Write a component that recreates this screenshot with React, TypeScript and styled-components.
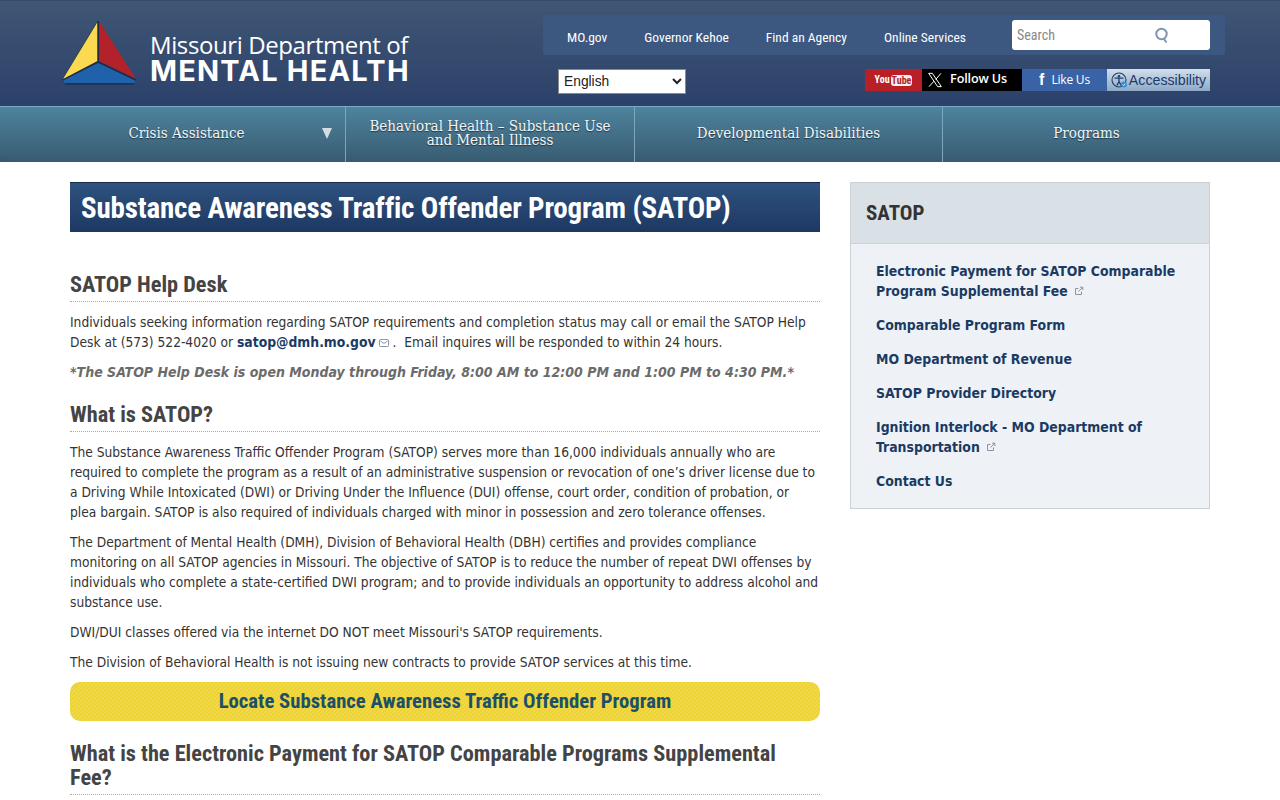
import React from 'react';
import styled, { createGlobalStyle } from 'styled-components';

const GlobalStyle = createGlobalStyle`
  html, body {
    margin: 0;
    padding: 0;
    height: 800px;
    overflow: hidden;
    background: #fff;
  }
  body {
    font-family: "DejaVu Sans Condensed", "DejaVu Sans", sans-serif;
    font-size: 13.65px;
    line-height: 20px;
    color: #333;
  }
`;

const HEADING_FONT = `"Liberation Sans Narrow", "Roboto Condensed", "Liberation Sans", sans-serif`;
const NAV_FONT = `"DejaVu Serif Condensed", "DejaVu Serif", serif`;

const Header = styled.header`
  height: 106px;
  box-sizing: border-box;
  background: linear-gradient(180deg, #3f5674 0%, #2c416a 100%);
  border-top: 1px solid #33496a;
  display: flex;
  justify-content: space-between;
  padding: 14px 55px 0 62px;
`;

const LogoLink = styled.a`
  display: flex;
  align-items: flex-start;
  gap: 12px;
  padding-top: 5px;
  color: #fff;
  text-decoration: none;
`;

const LogoText = styled.div`
  display: flex;
  flex-direction: column;
  padding-top: 12px;
`;

const LogoTop = styled.span`
  font-family: "Open Sans", sans-serif;
  font-size: 24px;
  line-height: 25px;
  letter-spacing: -0.4px;
  white-space: nowrap;
`;

const LogoBottom = styled.span`
  font-family: "Inter", sans-serif;
  font-weight: 700;
  font-size: 29px;
  line-height: 28px;
  letter-spacing: 1.2px;
  white-space: nowrap;
`;

const HeaderRight = styled.div`
  width: 682px;
  display: flex;
  flex-direction: column;
`;

const UtilityBar = styled.div`
  height: 40px;
  background: #3d5880;
  border-radius: 3px;
  display: flex;
  align-items: center;
  justify-content: space-between;
  padding: 0 15px 0 24px;
`;

const UtilityLinks = styled.nav`
  display: flex;
  gap: 37px;
  padding-top: 4px;
`;

const UtilityLink = styled.a`
  font-family: ${HEADING_FONT};
  font-size: 13.5px;
  color: #fff;
  text-decoration: none;
  white-space: nowrap;
`;

const SearchBox = styled.div`
  width: 198px;
  height: 30px;
  box-sizing: border-box;
  background: #fff;
  border-radius: 3px;
  display: flex;
  align-items: center;
  justify-content: space-between;
  padding: 0 40px 0 5px;
`;

const SearchLabel = styled.span`
  font-family: ${HEADING_FONT};
  font-size: 14px;
  color: #888;
`;

const ToolRow = styled.div`
  display: flex;
  justify-content: space-between;
  align-items: flex-start;
  padding: 14px 15px 0 15px;
`;

const LanguageSelect = styled.select`
  width: 128px;
  height: 25px;
  font-family: "Liberation Sans", sans-serif;
  font-size: 13.8px;
  color: #222;
  background: #fff;
  border: 1px solid #8a8a8a;
  padding: 0 0 0 1px;
`;

const SocialRow = styled.div`
  display: flex;
  height: 22px;
`;

const SocialItem = styled.a<{ $bg: string; $w: number; $inset?: number }>`
  width: ${p => p.$w}px;
  box-sizing: border-box;
  padding-right: ${p => p.$inset ?? 0}px;
  background: ${p => p.$bg};
  color: #fff;
  display: flex;
  align-items: center;
  justify-content: center;
  text-decoration: none;
  font-family: "Liberation Sans", sans-serif;
  font-size: 13px;
  white-space: nowrap;
`;

const YouWord = styled.span`
  font-family: ${HEADING_FONT};
  font-weight: 700;
  font-size: 10px;
  margin-right: 1px;
`;

const TubeWord = styled.span`
  font-family: ${HEADING_FONT};
  font-weight: 700;
  font-size: 10px;
  line-height: 11px;
  background: #eee;
  color: #b91f26;
  border-radius: 3px;
  padding: 0 1px;
`;

const FollowText = styled.span`
  font-family: "Open Sans", sans-serif;
  font-weight: 600;
  font-size: 12.6px;
  letter-spacing: -0.15px;
  margin-left: 7px;
  padding-bottom: 2px;
`;

const LikeMark = styled.span`
  font-family: "Liberation Sans", sans-serif;
  font-weight: 700;
  font-size: 16px;
  margin-right: 7px;
`;

const LikeText = styled.span`
  font-family: "Open Sans", sans-serif;
  font-size: 12px;
  letter-spacing: -0.2px;
`;

const AccessItem = styled(SocialItem)`
  background: linear-gradient(180deg, #d3dfeb 0%, #8da8c6 100%);
  color: #1c3a6c;
  font-family: "Liberation Sans", sans-serif;
  font-size: 14.2px;
  gap: 1px;
`;

const NavBar = styled.nav`
  height: 56px;
  display: grid;
  grid-template-columns: 346px 289px 308px 337px;
  background:
    repeating-linear-gradient(45deg, rgba(255,255,255,0.03) 0 1.41px, transparent 1.41px 2.83px),
    linear-gradient(180deg, #4c819c 0%, #34596f 100%);
  border-top: 1px solid #79a9c4;
  box-sizing: border-box;
`;

const NavItem = styled.a<{ $shift?: 'left' | 'right' }>`
  position: relative;
  display: flex;
  align-items: center;
  justify-content: center;
  box-sizing: border-box;
  text-align: center;
  font-family: ${NAV_FONT};
  font-size: 15px;
  line-height: 14px;
  color: #f2f5f7;
  text-shadow: 0 1px 1px rgba(0, 0, 0, 0.5);
  text-decoration: none;
  border-right: 1px solid #7aa6bf;
  padding-bottom: 4px;
  padding-left: ${p => (p.$shift === 'right' ? '28px' : '0')};
  padding-right: ${p => (p.$shift === 'left' ? '50px' : '0')};
  &:last-child {
    border-right: none;
  }
`;

const NavArrow = styled.span`
  position: absolute;
  right: 13px;
  top: 21px;
  width: 0;
  height: 0;
  border-left: 5.5px solid transparent;
  border-right: 5.5px solid transparent;
  border-top: 11px solid #d5dde0;
`;

const Page = styled.div`
  display: grid;
  grid-template-columns: 750px 360px;
  column-gap: 30px;
  padding: 20px 70px 0;
`;

const Main = styled.main`
  min-width: 0;
`;

const PageTitle = styled.h1`
  margin: 0 0 40px;
  height: 50px;
  box-sizing: border-box;
  padding-left: 11px;
  display: flex;
  align-items: center;
  background: linear-gradient(180deg, #2f527f 0%, #1d3862 100%);
  border-top: 1px solid #14294a;
  font-family: ${HEADING_FONT};
  font-weight: 700;
  font-size: 29px;
  letter-spacing: -0.17px;
  color: #fff;
  white-space: nowrap;
`;

const SectionHeading = styled.h2`
  margin: 0 0 10px;
  padding-bottom: 5px;
  border-bottom: 1px dotted #aaa;
  font-family: ${HEADING_FONT};
  font-weight: 700;
  font-size: 22.3px;
  line-height: 24px;
  color: #444;
`;

const BodyText = styled.p`
  margin: 0 0 10px;
`;

const EmailLink = styled.a`
  font-weight: 700;
  font-size: 13.8px;
  color: #1b3a63;
  text-decoration: none;
`;

const HoursNote = styled.p`
  margin: 0 0 20px;
  font-size: 14px;
  font-weight: 700;
  font-style: italic;
  color: #6b6b6b;
  white-space: nowrap;
`;

const LocateButton = styled.a`
  display: flex;
  align-items: center;
  justify-content: center;
  height: 39px;
  box-sizing: border-box;
  padding-bottom: 2px;
  margin: 0 0 20px;
  border-radius: 10px;
  background:
    repeating-linear-gradient(135deg, rgba(255,255,255,0.16) 0 1.41px, transparent 1.41px 2.83px),
    #eed22d;
  font-family: ${HEADING_FONT};
  font-weight: 700;
  font-size: 20.7px;
  color: #1c5068;
  text-decoration: none;
`;

const Sidebar = styled.aside`
  align-self: start;
  border: 1px solid #ccd1d6;
  background: #eef2f6;
`;

const SidebarTitle = styled.h3`
  margin: 0;
  height: 61px;
  box-sizing: border-box;
  padding-left: 15px;
  display: flex;
  align-items: center;
  background: #d9e0e6;
  border-bottom: 1px solid #ccd3da;
  font-family: ${HEADING_FONT};
  font-weight: 700;
  font-size: 21px;
  color: #333;
`;

const SidebarList = styled.ul`
  list-style: none;
  margin: 0;
  padding: 17px 25px 17px;
  display: flex;
  flex-direction: column;
  gap: 14px;
`;

const SidebarLink = styled.a`
  font-weight: 700;
  font-size: 13.9px;
  color: #1b3a63;
  text-decoration: none;
`;

const ExternalIcon = () => (
  <svg width="10" height="10" viewBox="0 0 10 10" fill="none" stroke="#8a94a3" strokeWidth="1" style={{ marginLeft: 6 }}>
    <path d="M7.5 5.5v3h-6v-6h3" />
    <path d="M4.5 5.5l4-4M6 1.2h2.8V4" />
  </svg>
);

const MailIcon = () => (
  <svg width="10" height="8" viewBox="0 0 10 8" fill="none" stroke="#8a94a3" strokeWidth="1" style={{ margin: '0 4px 0 3px' }}>
    <rect x="0.5" y="0.5" width="9" height="7" rx="1" />
    <path d="M1.5 2l3.5 2.5L8.5 2" />
  </svg>
);

const LogoMark = () => (
  <svg width="76" height="66" viewBox="0 0 76 66">
    <path d="M0 60 L36 0 L37 43 L2 62 Z" fill="#16233c" opacity="0.75" />
    <path d="M1 59 L35.500 2 L35.500 41 Z" fill="#fbd950" />
    <path d="M37 1 L74 59 L37 41 Z" fill="#b3222a" />
    <path d="M1 60.500 L36 43 L74 60.500 L72 63 L3 63 Z" fill="#1f62ab" />
    <path d="M36.300 1 V42 L74 60" stroke="#1d2b45" strokeWidth="1.500" fill="none" />
    <path d="M3 64 H72" stroke="#1c3050" strokeWidth="1.500" />
  </svg>
);

const SearchIcon = () => (
  <svg width="16" height="17" viewBox="0 0 16 17" fill="none" stroke="#7f97ad" strokeWidth="2">
    <circle cx="7.500" cy="7" r="5.200" />
    <path d="M10 12l2.500 3.500" />
  </svg>
);

const XIcon = () => (
  <svg width="16" height="16" viewBox="0 0 24 24" fill="none" stroke="#fff" strokeWidth="1.500">
    <path d="M2.500 2h5.500l13.500 20H16z" />
    <path d="M21 2l-8 9.300M10.500 13.800L3 22" />
  </svg>
);

const AccessIcon = () => (
  <svg width="17" height="17" viewBox="0 0 17 17" fill="none">
    <circle cx="8" cy="8" r="7" stroke="#1f3f6e" strokeWidth="1.100" />
    <circle cx="8" cy="4.300" r="1.300" fill="#1f3f6e" />
    <path d="M3.500 6.200h9M8 6.200v3.500M8 9.700l-2.200 3.800M8 9.700l2.200 3.800" stroke="#1f3f6e" strokeWidth="1.300" />
    <circle cx="13" cy="12.500" r="3" fill="#2f8fd8" />
    <path d="M11.700 12.500l1 1 1.600-1.800" stroke="#fff" strokeWidth="0.800" />
  </svg>
);

const sidebarLinks: { label: string; external?: boolean }[] = [
  { label: 'Electronic Payment for SATOP Comparable Program Supplemental Fee', external: true },
  { label: 'Comparable Program Form' },
  { label: 'MO Department of Revenue' },
  { label: 'SATOP Provider Directory' },
  { label: 'Ignition Interlock - MO Department of Transportation', external: true },
  { label: 'Contact Us' },
];

const App: React.FC = () => {
  return (
    <>
      <GlobalStyle />
      <Header>
        <LogoLink href="#">
          <LogoMark />
          <LogoText>
            <LogoTop>Missouri Department of</LogoTop>
            <LogoBottom>MENTAL HEALTH</LogoBottom>
          </LogoText>
        </LogoLink>
        <HeaderRight>
          <UtilityBar>
            <UtilityLinks>
              <UtilityLink href="#">MO.gov</UtilityLink>
              <UtilityLink href="#">Governor Kehoe</UtilityLink>
              <UtilityLink href="#">Find an Agency</UtilityLink>
              <UtilityLink href="#">Online Services</UtilityLink>
            </UtilityLinks>
            <SearchBox>
              <SearchLabel>Search</SearchLabel>
              <SearchIcon />
            </SearchBox>
          </UtilityBar>
          <ToolRow>
            <LanguageSelect defaultValue="English">
              <option>English</option>
            </LanguageSelect>
            <SocialRow>
              <SocialItem href="#" $bg="#b91f26" $w={57}>
                <YouWord>You</YouWord>
                <TubeWord>Tube</TubeWord>
              </SocialItem>
              <SocialItem href="#" $bg="#000" $w={100} $inset={10}>
                <XIcon />
                <FollowText>Follow Us</FollowText>
              </SocialItem>
              <SocialItem href="#" $bg="#3a63a6" $w={85}>
                <LikeMark>f</LikeMark>
                <LikeText>Like Us</LikeText>
              </SocialItem>
              <AccessItem href="#" $bg="#bbb" $w={103}>
                <AccessIcon />
                Accessibility
              </AccessItem>
            </SocialRow>
          </ToolRow>
        </HeaderRight>
      </Header>

      <NavBar>
        <NavItem href="#" $shift="right">
          Crisis Assistance
          <NavArrow />
        </NavItem>
        <NavItem href="#">
          Behavioral Health – Substance Use
          <br />
          and Mental Illness
        </NavItem>
        <NavItem href="#">Developmental Disabilities</NavItem>
        <NavItem href="#" $shift="left">Programs</NavItem>
      </NavBar>

      <Page>
        <Main>
          <PageTitle>Substance Awareness Traffic Offender Program (SATOP)</PageTitle>

          <SectionHeading>SATOP Help Desk</SectionHeading>
          <BodyText>
            Individuals seeking information regarding SATOP requirements and completion status may call or email the
            SATOP Help Desk at (573) 522-4020 or <EmailLink href="#">satop@dmh.mo.gov</EmailLink>
            <MailIcon />.&nbsp; Email inquires will be responded to within 24 hours.
          </BodyText>
          <HoursNote>
            *The SATOP Help Desk is open Monday through Friday, 8:00 AM to 12:00 PM and 1:00 PM to 4:30 PM.*
          </HoursNote>

          <SectionHeading>What is SATOP?</SectionHeading>
          <BodyText>
            The Substance Awareness Traffic Offender Program (SATOP) serves more than 16,000 individuals annually who
            are required to complete the program as a result of an administrative suspension or revocation of one’s
            driver license due to a Driving While Intoxicated (DWI) or Driving Under the Influence (DUI) offense, court
            order, condition of probation, or plea&nbsp;bargain. SATOP is also required of individuals charged with minor in
            possession and zero tolerance offenses.
          </BodyText>
          <BodyText>
            The Department of Mental Health (DMH), Division of Behavioral Health (DBH) certifies and provides compliance
            monitoring on all SATOP agencies in Missouri. The objective of SATOP is to reduce the number of repeat DWI
            offenses by individuals who complete a state-certified DWI program; and to provide individuals an
            opportunity to address alcohol and substance use.
          </BodyText>
          <BodyText>DWI/DUI classes offered via the internet DO NOT meet Missouri's SATOP requirements.</BodyText>
          <BodyText>The Division of Behavioral Health is not issuing new contracts to provide SATOP services at this time.</BodyText>

          <LocateButton href="#">Locate Substance Awareness Traffic Offender Program</LocateButton>

          <SectionHeading>What is the Electronic Payment for SATOP Comparable Programs Supplemental Fee?</SectionHeading>
        </Main>

        <Sidebar>
          <SidebarTitle>SATOP</SidebarTitle>
          <SidebarList>
            {sidebarLinks.map(link => (
              <li key={link.label}>
                <SidebarLink href="#">
                  {link.label}
                  {link.external && <ExternalIcon />}
                </SidebarLink>
              </li>
            ))}
          </SidebarList>
        </Sidebar>
      </Page>
    </>
  );
};

export default App;
